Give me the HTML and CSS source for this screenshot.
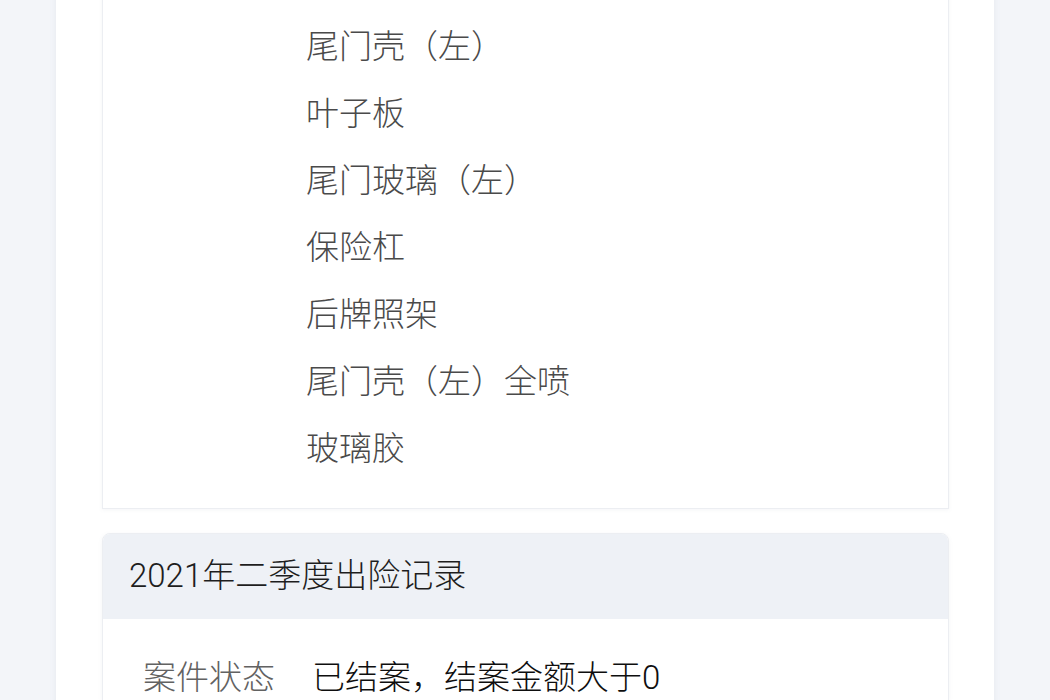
FILE: index.html
```html
<!DOCTYPE html>
<html lang="zh-CN">
<head>
<meta charset="utf-8">
<title>出险记录</title>
<link rel="stylesheet" href="styles.css">
</head>
<body>
<div class="panel">
  <section class="card parts">
    <ul class="part-list">
      <li>尾门壳（左）</li>
      <li>叶子板</li>
      <li>尾门玻璃（左）</li>
      <li>保险杠</li>
      <li>后牌照架</li>
      <li>尾门壳（左）全喷</li>
      <li>玻璃胶</li>
    </ul>
  </section>
  <section class="card record">
    <header class="record-head">2021年二季度出险记录</header>
    <div class="record-body">
      <div class="row">
        <span class="label">案件状态</span>
        <span class="value">已结案，结案金额大于0</span>
      </div>
    </div>
  </section>
</div>
</body>
</html>
```

FILE: styles.css
```css
html, body {
  margin: 0;
  padding: 0;
  height: 100%;
  overflow: hidden;
}
body {
  background: #f3f5f9;
  font-family: Roboto, "Noto Sans CJK SC", "Noto Sans", sans-serif;
  font-weight: 300;
}
.panel {
  margin-left: 56px;
  width: 938px;
  min-height: 800px;
  margin-top: -30px;
  background: #ffffff;
  box-shadow: 0 0 6px rgba(120, 130, 150, 0.10);
  padding: 0 45px 0 46px;
  box-sizing: border-box;
}
.card {
  border: 1px solid #eceef2;
  background: #fff;
  box-shadow: 0 1px 4px rgba(120, 130, 150, 0.08);
}
.parts {
  border-top: none;
  padding: 43px 0 26px 0;
}
.part-list {
  list-style: none;
  margin: 0;
  padding: 0 0 0 203px;
}
.part-list li {
  font-size: 33px;
  line-height: 67px;
  height: 67px;
  color: #4a4a4a;
}
.record {
  margin-top: 24px;
  border-radius: 8px 8px 0 0;
  overflow: hidden;
}
.record-head {
  background: #eef1f6;
  height: 85px;
  display: flex;
  align-items: center;
  padding: 0 0 8px 26px;
  box-sizing: border-box;
  font-size: 33px;
  color: #1e1e1e;
}
.record-body {
  padding: 31px 0 0 40px;
}
.row {
  display: flex;
  align-items: center;
  height: 50px;
  font-size: 33px;
}
.label {
  width: 169px;
  color: #626262;
}
.value {
  color: #0e0e0e;
}
```
